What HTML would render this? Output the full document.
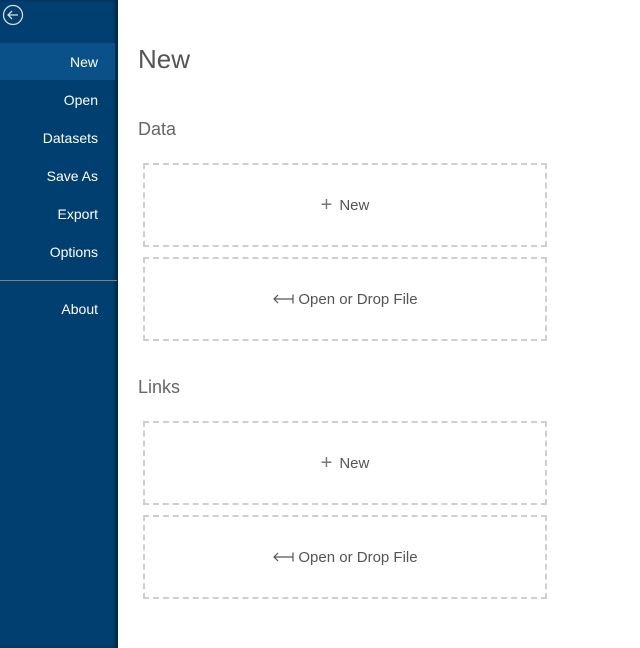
<!DOCTYPE html>
<html><head><style>
body{margin:0;width:640px;height:648px;background:#fff;font-family:"Liberation Sans",sans-serif;position:relative;overflow:hidden}
.side{position:absolute;left:0;top:0;width:118px;height:648px;background:#003f6f;box-shadow:inset -3px 0 3px rgba(0,0,0,.35)}
.item{position:absolute;right:20px;color:#fff;font-size:14px;text-align:right}
.sel{position:absolute;left:0;top:43px;width:115px;height:37px;background:#0a5189}
.div{position:absolute;left:0;top:280px;width:117px;height:1px;background:#8a7f78}
h1{position:absolute;left:138px;top:44px;margin:0;font-weight:normal;font-size:26px;color:#555}
h2{position:absolute;left:138px;margin:0;font-weight:normal;font-size:18px;color:#666}
.box{position:absolute;left:143px;width:400px;height:80px;border:2px dashed #cfcfcf;display:flex;align-items:center;justify-content:center;color:#555;font-size:15px}
</style></head><body>
<div class="side">
<svg style="position:absolute;left:2px;top:4px" width="22" height="22" viewBox="0 0 22 22"><circle cx="11" cy="11" r="9.5" fill="none" stroke="#ddd" stroke-width="1.3"/><path d="M16 11H6M10 7l-4 4 4 4" fill="none" stroke="#ddd" stroke-width="1.3"/></svg>
<div class="sel"></div>
<div class="item" style="top:54px">New</div>
<div class="item" style="top:92px">Open</div>
<div class="item" style="top:130px">Datasets</div>
<div class="item" style="top:168px">Save As</div>
<div class="item" style="top:206px">Export</div>
<div class="item" style="top:244px">Options</div>
<div class="div"></div>
<div class="item" style="top:301px">About</div>
</div>
<h1>New</h1>
<h2 style="top:119px">Data</h2>
<div class="box" style="top:163px"><span style="font-size:20px;margin-right:7px;color:#777;font-weight:300">+</span>New</div>
<div class="box" style="top:257px"><svg width="22" height="12" viewBox="0 0 22 12" style="margin-right:4px"><path d="M21 6H2M6 2L2 6l4 4M21 1.5v9" fill="none" stroke="#555" stroke-width="1.2"/></svg>Open or Drop File</div>
<h2 style="top:377px">Links</h2>
<div class="box" style="top:421px"><span style="font-size:20px;margin-right:7px;color:#777;font-weight:300">+</span>New</div>
<div class="box" style="top:515px"><svg width="22" height="12" viewBox="0 0 22 12" style="margin-right:4px"><path d="M21 6H2M6 2L2 6l4 4M21 1.5v9" fill="none" stroke="#555" stroke-width="1.2"/></svg>Open or Drop File</div>
</body></html>
